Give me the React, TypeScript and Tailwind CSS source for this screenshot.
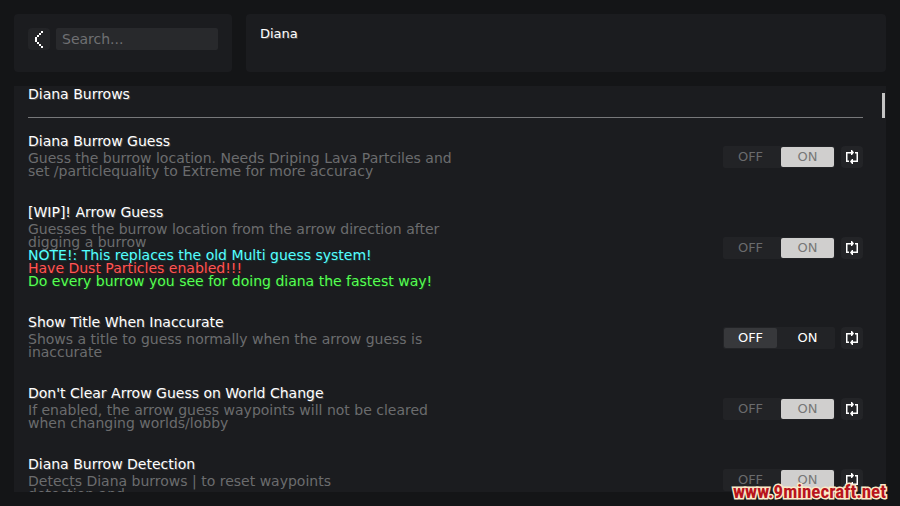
import { useState } from 'react';
import clsx from 'clsx';

type Line = { text: string; cls?: string };

type Setting = {
  id: string;
  title: string;
  lines: Line[];
  on: boolean;
};

const SETTINGS: Setting[] = [
  {
    id: 'burrow-guess',
    title: 'Diana Burrow Guess',
    lines: [
      { text: 'Guess the burrow location. Needs Driping Lava Partciles and' },
      { text: 'set /particlequality to Extreme for more accuracy' },
    ],
    on: true,
  },
  {
    id: 'arrow-guess',
    title: '[WIP]! Arrow Guess',
    lines: [
      { text: 'Guesses the burrow location from the arrow direction after' },
      { text: 'digging a burrow' },
      { text: 'NOTE!: This replaces the old Multi guess system!', cls: 'text-[#55ffff] [text-shadow:1px_1px_0_#153f3f]' },
      { text: 'Have Dust Particles enabled!!!', cls: 'text-[#ff5555] [text-shadow:1px_1px_0_#3f1515]' },
      { text: 'Do every burrow you see for doing diana the fastest way!', cls: 'text-[#55ff55] [text-shadow:1px_1px_0_#153f15]' },
    ],
    on: true,
  },
  {
    id: 'inaccurate-title',
    title: 'Show Title When Inaccurate',
    lines: [
      { text: 'Shows a title to guess normally when the arrow guess is' },
      { text: 'inaccurate' },
    ],
    on: false,
  },
  {
    id: 'keep-guess',
    title: "Don't Clear Arrow Guess on World Change",
    lines: [
      { text: 'If enabled, the arrow guess waypoints will not be cleared' },
      { text: 'when changing worlds/lobby' },
    ],
    on: true,
  },
  {
    id: 'burrow-detection',
    title: 'Diana Burrow Detection',
    lines: [
      { text: 'Detects Diana burrows | to reset waypoints' },
      { text: 'detection and' },
    ],
    on: true,
  },
];

function BackIcon() {
  return (
    <svg width="10" height="17" viewBox="0 0 10 17" fill="#fff" shapeRendering="crispEdges" aria-hidden="true">
      <path d="M7 0h2v2h-2zM5 2h2v2h-2zM3 4h2v2h-2zM1 6h2v5h-2zM3 11h2v2h-2zM5 13h2v2h-2zM7 15h2v2h-2z" />
    </svg>
  );
}

function ResetIcon() {
  return (
    <svg width="12" height="14" viewBox="0 0 12 14" fill="#fff" aria-hidden="true">
      <path d="M0 2H5V0H6L8 2.5L6 5H5V3.4H1.5V10.6H3V12H0Z" />
      <path d="M12 12H7V14H6L4 11.5L6 9H7V10.6H10.5V3.4H9V2H12Z" />
    </svg>
  );
}

function Toggle({ label, on, onChange }: { label: string; on: boolean; onChange: (v: boolean) => void }) {
  const seg = 'h-5 flex-1 rounded-xs text-[13px] leading-5';
  return (
    <div role="group" aria-label={label} className="flex h-[22px] w-28 items-center gap-1 rounded-xs bg-[#222326] p-px">
      <button type="button" aria-pressed={!on} onClick={() => onChange(false)}
        className={clsx(seg, on ? 'text-[#6a6b6d]' : 'bg-[#37383b] text-white')}>
        OFF
      </button>
      <button type="button" aria-pressed={on} onClick={() => onChange(true)}
        className={clsx(seg, on ? 'bg-[#d0cfce] text-[#777777]' : 'text-white')}>
        ON
      </button>
    </div>
  );
}

function SettingRow({ setting }: { setting: Setting }) {
  const [on, setOn] = useState(setting.on);

  return (
    <li className="flex items-center justify-between">
      <div>
        <h3 className="text-sm leading-[14px] text-white [text-shadow:1px_1px_0_#4a4a4a]">{setting.title}</h3>
        <p className="mt-1 text-sm leading-[13px] text-[#6b6c6e]">
          {setting.lines.map(l => (
            <span key={l.text} className={clsx('block whitespace-nowrap', l.cls)}>{l.text}</span>
          ))}
        </p>
      </div>
      <div className="flex shrink-0 items-center gap-1.5 pt-0.5">
        <Toggle label={setting.title} on={on} onChange={setOn} />
        <button type="button" aria-label={`Reset ${setting.title}`} onClick={() => setOn(setting.on)}
          className="flex size-[22px] items-center justify-center rounded-sm bg-[#232427]">
          <ResetIcon />
        </button>
      </div>
    </li>
  );
}

export default function App() {
  const [query, setQuery] = useState('');

  return (
    <div className="relative flex h-screen flex-col gap-3.5 overflow-hidden bg-[#141517] p-3.5 font-['DejaVu_Sans',sans-serif]">
      <header className="flex gap-3.5">
        <div className="flex h-[58px] w-[218px] shrink-0 gap-1.5 rounded-sm bg-[#1b1c1f] p-3.5">
          <button type="button" aria-label="Back" className="flex size-[22px] items-center justify-center rounded-sm bg-[#232427]">
            <BackIcon />
          </button>
          <input type="text" aria-label="Search" placeholder="Search..." value={query} onChange={e => setQuery(e.target.value)}
            className="h-[22px] min-w-0 flex-1 rounded-xs bg-[#28292c] px-1.5 text-sm text-white outline-none placeholder:text-[#6f7073]" />
        </div>
        <div className="flex-1 rounded-sm bg-[#1b1c1f] px-3.5 py-3">
          <h1 className="text-[13px] leading-4 text-white [text-shadow:1px_1px_0_#4a4a4a]">Diana</h1>
        </div>
      </header>

      <main className="flex min-h-0 flex-1 bg-[#1b1c1f]">
        <div className="min-w-0 flex-1 overflow-y-auto pl-3.5 [scrollbar-width:none]">
          <h2 className="border-b border-[#77787a] pb-[15px] text-sm leading-4 text-white [text-shadow:1px_1px_0_#4a4a4a]">
            Diana Burrows
          </h2>
          <ul className="mt-4 flex flex-col gap-[27px]">
            {SETTINGS.map(s => <SettingRow key={s.id} setting={s} />)}
          </ul>
        </div>
        <div className="w-[23px] shrink-0 pt-[7px] pl-[19px]">
          <div className="h-[25px] w-[3px] bg-[#c4c4c4]" />
        </div>
      </main>

      <a href="#site"
        className="absolute right-3.5 bottom-1 font-['Roboto_Condensed','Roboto',sans-serif] text-[19px] leading-5 font-bold text-[#b8141c] [-webkit-text-stroke:3px_#fbe9c8] [paint-order:stroke_fill]">
        www.9minecraft.net
      </a>
    </div>
  );
}
